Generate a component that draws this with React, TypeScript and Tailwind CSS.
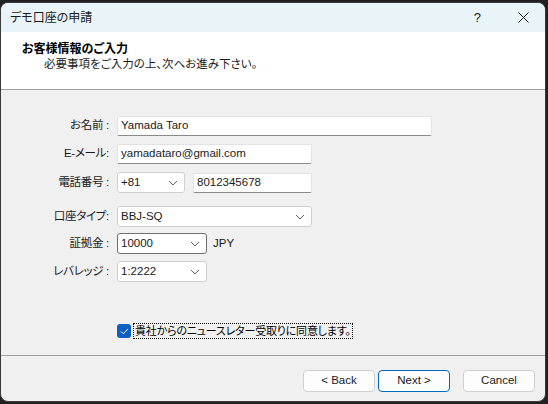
import React from "react";

const font = { fontFamily: '"Liberation Sans", "Noto Sans CJK JP", sans-serif' };
const jp = "text-[11.5px] [font-feature-settings:'palt']";

function Chevron() {
  return (
    <svg width="10" height="6" viewBox="0 0 10 6" className="shrink-0">
      <path d="M1 1l4 4 4-4" fill="none" stroke="#606060" strokeWidth="1" />
    </svg>
  );
}

function TextBox({ value, w }: { value: string; w: string }) {
  return (
    <div
      className={`${w} h-[20px] flex items-center bg-white border border-[#e3e3e3] border-b-[#8a8a8a] rounded-[2px] px-[3px] text-[11.5px] text-[#1a1a1a]`}
    >
      {value}
    </div>
  );
}

function Select({ value, w, dark }: { value: string; w: string; dark?: boolean }) {
  return (
    <div
      className={`${w} h-[21px] flex items-center justify-between bg-white border ${
        dark ? "border-[#707070]" : "border-[#cfcfcf]"
      } rounded-[3px] pl-[3px] pr-[6px] text-[11.5px] text-[#1a1a1a]`}
    >
      <span>{value}</span>
      <Chevron />
    </div>
  );
}

function Row({ label, children, mt }: { label: string; children: React.ReactNode; mt: string }) {
  return (
    <div className={`flex items-center ${mt}`}>
      <div className={`w-[109px] text-right ${jp} tracking-[-0.3px] text-[#1a1a1a] pr-[1px]`}>{label}</div>
      <div className="ml-[7px] flex items-center">{children}</div>
    </div>
  );
}

export default function App() {
  return (
    <div className="w-[548px] h-[404px] bg-[#202020] pt-[2px] overflow-hidden" style={font}>
      <div className="w-[546px] h-[400px] bg-[#f0f0f0] rounded-[8px] border border-[#3a3a3a] overflow-hidden flex flex-col">
        {/* title bar */}
        <div className="h-[29px] bg-[#e8f4f8] flex items-center shrink-0">
          <span className="ml-[9px] text-[12px] [font-feature-settings:'palt'] text-[#1a1a1a]">デモ口座の申請</span>
          <span className="ml-auto mr-[37px] text-[13px] text-[#1a1a1a]">?</span>
          <svg width="11" height="11" viewBox="0 0 11 11" className="mr-[16px]">
            <path d="M0.5 0.5l10 10M10.5 0.5l-10 10" stroke="#1a1a1a" strokeWidth="1" />
          </svg>
        </div>
        {/* header */}
        <div className="h-[58px] bg-white border-b border-[#a0a0a0] shrink-0 pt-[9px]">
          <div className="ml-[21px] text-[12px] [font-feature-settings:'palt'] font-bold text-[#000] leading-[16px]">
            お客様情報のご入力
          </div>
          <div className={`ml-[43px] ${jp} text-[#1a1a1a] leading-[15px]`}>
            必要事項をご入力の上、次へお進み下さい。
          </div>
        </div>
        {/* form */}
        <div className="flex-1 flex flex-col pt-[26px]">
          <Row label="お名前 :" mt="mt-0">
            <TextBox value="Yamada Taro" w="w-[315px]" />
          </Row>
          <Row label="E-メール:" mt="mt-[8px]">
            <TextBox value="yamadataro@gmail.com" w="w-[195px]" />
          </Row>
          <Row label="電話番号 :" mt="mt-[8px]">
            <Select value="+81" w="w-[68px]" />
            <div className="ml-[8px]">
              <TextBox value="8012345678" w="w-[119px]" />
            </div>
          </Row>
          <Row label="口座タイプ:" mt="mt-[13px]">
            <Select value="BBJ-SQ" w="w-[195px]" />
          </Row>
          <Row label="証拠金 :" mt="mt-[6px]">
            <Select value="10000" w="w-[90px]" dark />
            <span className="ml-[6px] text-[11.5px] text-[#1a1a1a]">JPY</span>
          </Row>
          <Row label="レバレッジ :" mt="mt-[7px]">
            <Select value="1:2222" w="w-[90px]" />
          </Row>
          <div className="flex items-center ml-[116px] mt-[41px]">
            <div className="w-[14px] h-[14px] rounded-[3px] bg-[#0f5fc0] flex items-center justify-center">
              <svg width="9" height="7" viewBox="0 0 9 7">
                <path d="M1 3.5l2.3 2.3L8 1" fill="none" stroke="#fff" strokeWidth="1" />
              </svg>
            </div>
            <span className="ml-[2px] px-[1px] border border-dotted border-[#000] text-[11px] [font-feature-settings:'palt'] tracking-[-0.2px] text-[#000] leading-[14px]">
              貴社からのニュースレター受取りに同意します。
            </span>
          </div>
        </div>
        {/* footer */}
        <div className="h-[46px] border-t border-[#a0a0a0] shrink-0 flex items-start pt-[14px]">
          <div className="ml-auto flex text-[11.5px] text-[#1a1a1a]">
            <button className="w-[72px] h-[22px] bg-[#fdfdfd] border border-[#d0d0d0] rounded-[4px]">
              &lt; Back
            </button>
            <button className="ml-[3px] w-[72px] h-[22px] bg-[#fdfdfd] border border-[#0067c0] rounded-[4px]">
              Next &gt;
            </button>
            <button className="ml-[13px] mr-[10px] w-[72px] h-[22px] bg-[#fdfdfd] border border-[#d0d0d0] rounded-[4px]">
              Cancel
            </button>
          </div>
        </div>
      </div>
    </div>
  );
}
